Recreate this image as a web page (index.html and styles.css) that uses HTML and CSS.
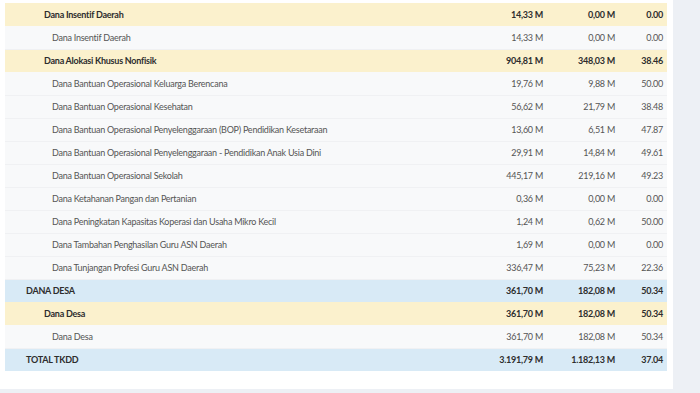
FILE: index.html
```html
<!DOCTYPE html>
<html lang="id">
<head>
    <meta charset="UTF-8">
    <meta name="viewport" content="width=device-width, initial-scale=1.0">
    <title>Realisasi TKDD</title>
    <link rel="stylesheet" href="styles.css">
</head>
<body>
    <!-- Tabel realisasi TKDD -->
    <div class="card">
        <table class="tkdd">
            <colgroup>
                <col>
                <col class="col-pagu">
                <col class="col-real">
                <col class="col-pct">
            </colgroup>
            <tbody>
                <tr class="lvl-2"><td class="name">Dana Insentif Daerah</td><td>14,33 M</td><td>0,00 M</td><td>0.00</td></tr>
                <tr class="lvl-3"><td class="name">Dana Insentif Daerah</td><td>14,33 M</td><td>0,00 M</td><td>0.00</td></tr>
                <tr class="lvl-2"><td class="name">Dana Alokasi Khusus Nonfisik</td><td>904,81 M</td><td>348,03 M</td><td>38.46</td></tr>
                <tr class="lvl-3"><td class="name">Dana Bantuan Operasional Keluarga Berencana</td><td>19,76 M</td><td>9,88 M</td><td>50.00</td></tr>
                <tr class="lvl-3"><td class="name">Dana Bantuan Operasional Kesehatan</td><td>56,62 M</td><td>21,79 M</td><td>38.48</td></tr>
                <tr class="lvl-3"><td class="name">Dana Bantuan Operasional Penyelenggaraan (BOP) Pendidikan Kesetaraan</td><td>13,60 M</td><td>6,51 M</td><td>47.87</td></tr>
                <tr class="lvl-3"><td class="name">Dana Bantuan Operasional Penyelenggaraan - Pendidikan Anak Usia Dini</td><td>29,91 M</td><td>14,84 M</td><td>49.61</td></tr>
                <tr class="lvl-3"><td class="name">Dana Bantuan Operasional Sekolah</td><td>445,17 M</td><td>219,16 M</td><td>49.23</td></tr>
                <tr class="lvl-3"><td class="name">Dana Ketahanan Pangan dan Pertanian</td><td>0,36 M</td><td>0,00 M</td><td>0.00</td></tr>
                <tr class="lvl-3"><td class="name">Dana Peningkatan Kapasitas Koperasi dan Usaha Mikro Kecil</td><td>1,24 M</td><td>0,62 M</td><td>50.00</td></tr>
                <tr class="lvl-3"><td class="name">Dana Tambahan Penghasilan Guru ASN Daerah</td><td>1,69 M</td><td>0,00 M</td><td>0.00</td></tr>
                <tr class="lvl-3"><td class="name">Dana Tunjangan Profesi Guru ASN Daerah</td><td>336,47 M</td><td>75,23 M</td><td>22.36</td></tr>
                <tr class="lvl-1"><td class="name">DANA DESA</td><td>361,70 M</td><td>182,08 M</td><td>50.34</td></tr>
                <tr class="lvl-2"><td class="name">Dana Desa</td><td>361,70 M</td><td>182,08 M</td><td>50.34</td></tr>
                <tr class="lvl-3"><td class="name">Dana Desa</td><td>361,70 M</td><td>182,08 M</td><td>50.34</td></tr>
                <tr class="lvl-1"><td class="name">TOTAL TKDD</td><td>3.191,79 M</td><td>1.182,13 M</td><td>37.04</td></tr>
            </tbody>
        </table>
    </div>
</body>
</html>
```

FILE: styles.css
```css
body {
    margin: 0;
    background-color: #edf0f5;
    font-family: 'Lato', 'Liberation Sans', sans-serif;
    font-size: 9px;
    letter-spacing: -0.25px;
    color: #555;
}

.card {
    width: 662px;
    padding: 3px 6px 18px 5px;
    background-color: #fff;
}

.tkdd {
    width: 100%;
    border-collapse: collapse;
    table-layout: fixed;
}

.col-pagu {
    width: 76px;
}

.col-real {
    width: 72px;
}

.col-pct {
    width: 48px;
}

.tkdd td {
    height: 23px;
    padding: 0 4px 0 0;
    text-align: right;
    white-space: nowrap;
    box-sizing: border-box;
}

.tkdd td.name {
    text-align: left;
}

/* Level 1 - kelompok utama */
.lvl-1 td {
    background-color: #d8eaf6;
    font-weight: bold;
    color: #2d2d2d;
}

.lvl-1 td.name {
    padding-left: 21px;
}

/* Level 2 - sub kelompok */
.lvl-2 td {
    background-color: #fbf1cd;
    font-weight: bold;
    color: #2d2d2d;
}

.lvl-2 td.name {
    padding-left: 39px;
}

/* Level 3 - rincian */
.lvl-3 td {
    background-color: #f8f9fa;
    border-bottom: 1px solid #f0f1f3;
}

.lvl-3 td.name {
    padding-left: 47px;
}
```
